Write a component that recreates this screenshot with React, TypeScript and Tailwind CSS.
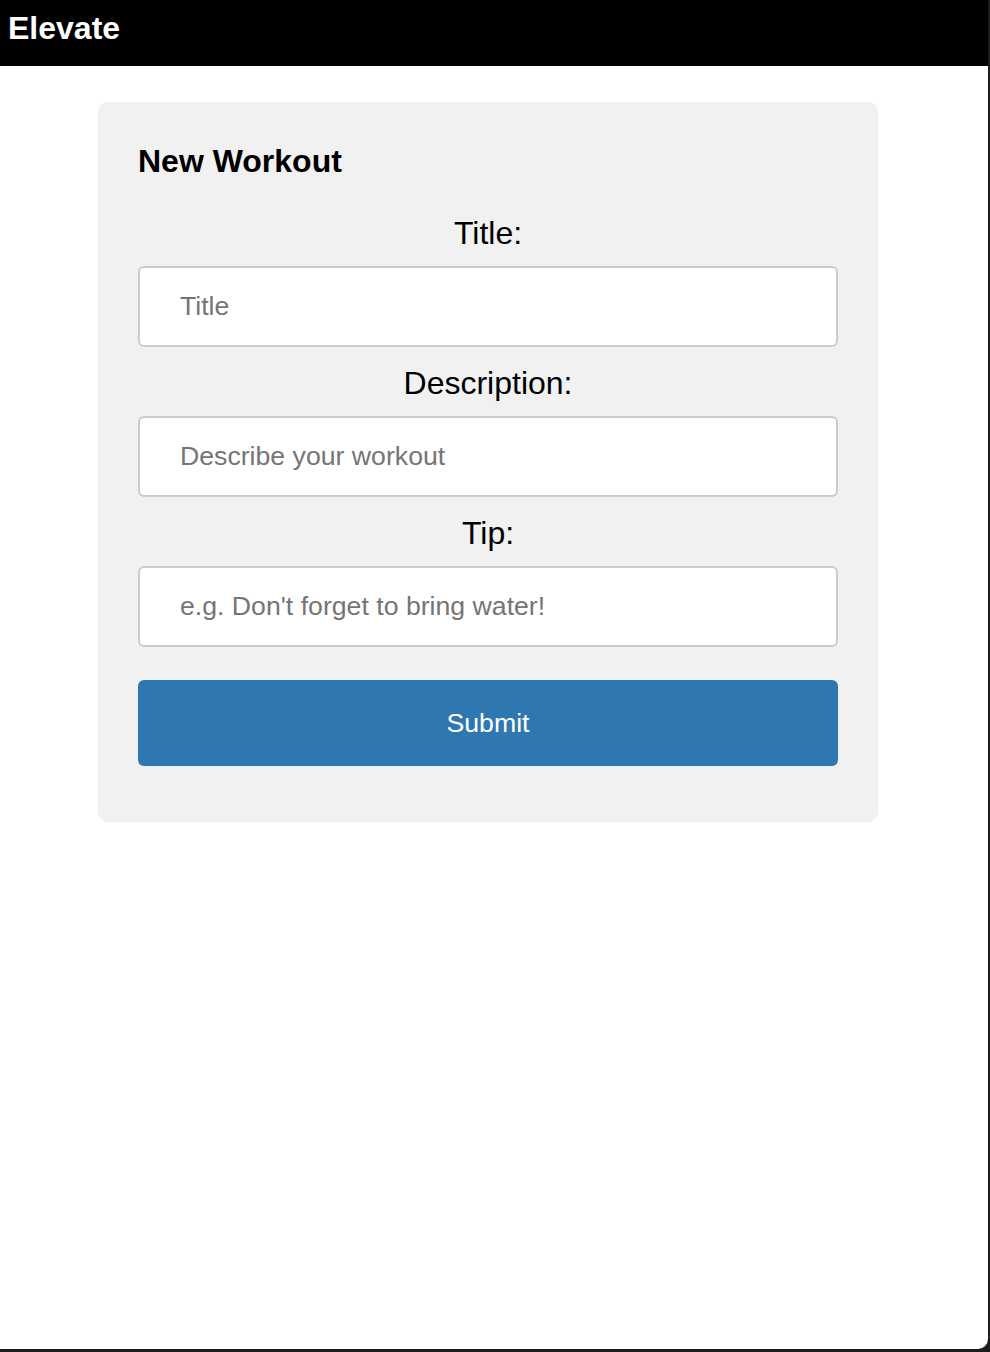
import React from "react";

export default function App() {
  const font = { fontFamily: '"Liberation Sans", Arial, sans-serif' };
  return (
    <div className="w-[990px] h-[1352px] bg-[#1c1c1c]" style={font}>
      <div className="w-[988px] h-[1349px] bg-white rounded-br-[10px] overflow-hidden flex flex-col">
        <header className="h-[66px] bg-black px-[8px] pt-[10px] shrink-0">
          <h1 className="text-white text-[32px] leading-[37px] font-bold">Elevate</h1>
        </header>
        <main className="flex justify-start pt-[36px] pl-[98px]">
          <form
            className="w-[780px] bg-[#f1f1f1] rounded-[10px] px-[40px] pt-[41px] pb-[56px] flex flex-col"
            onSubmit={(e) => e.preventDefault()}
          >
            <h2 className="text-black text-[32px] leading-[37px] font-bold mb-[35px]">New Workout</h2>

            <label className="text-center text-black text-[32px] leading-[37px] mb-[14px]">Title:</label>
            <input
              className="h-[81px] w-full bg-white border-2 border-[#cccccc] rounded-[6px] px-[40px] text-[26.67px] placeholder:text-[#757575] outline-none"
              placeholder="Title"
            />

            <label className="text-center text-black text-[32px] leading-[37px] mt-[18px] mb-[14px]">Description:</label>
            <input
              className="h-[81px] w-full bg-white border-2 border-[#cccccc] rounded-[6px] px-[40px] text-[26.67px] placeholder:text-[#757575] outline-none"
              placeholder="Describe your workout"
            />

            <label className="text-center text-black text-[32px] leading-[37px] mt-[18px] mb-[14px]">Tip:</label>
            <input
              className="h-[81px] w-full bg-white border-2 border-[#cccccc] rounded-[6px] px-[40px] text-[26.67px] placeholder:text-[#757575] outline-none"
              placeholder="e.g. Don't forget to bring water!"
            />

            <button
              type="submit"
              className="mt-[33px] h-[86px] w-full bg-[#2e77b1] rounded-[6px] text-white text-[26.67px]"
            >
              Submit
            </button>
          </form>
        </main>
      </div>
    </div>
  );
}
